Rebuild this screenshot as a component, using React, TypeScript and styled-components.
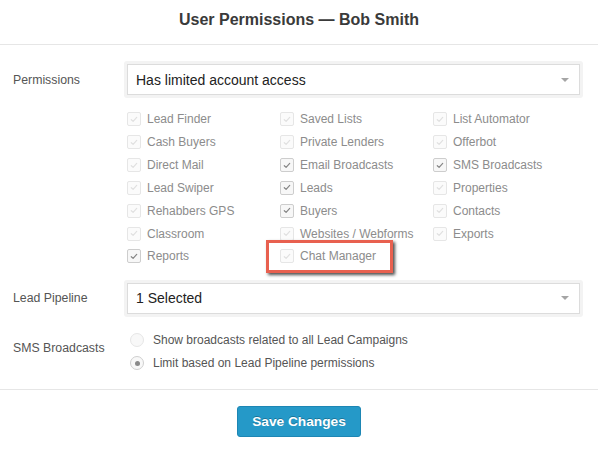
import React from "react";
import styled, { createGlobalStyle } from "styled-components";

const Global = createGlobalStyle`
  html, body { margin: 0; padding: 0; background: #fff; }
  body { font-family: "Liberation Sans", Arial, sans-serif; }
  * { box-sizing: border-box; }
`;

const Modal = styled.div`
  width: 598px;
  height: 452px;
  background: #fff;
  display: flex;
  flex-direction: column;
`;

const Header = styled.div`
  padding: 11px 0 15px;
  border-bottom: 1px solid #e6e6e6;
  text-align: center;
`;

const Title = styled.h1`
  margin: 0;
  font-size: 16px;
  line-height: 18px;
  font-weight: bold;
  color: #3a3a3a;
`;

const Body = styled.div`
  padding: 16px 15px 0 0;
  display: flex;
  flex-direction: column;
  height: 345px;
  border-bottom: 1px solid #e6e6e6;
`;

const FormRow = styled.div<{ $align?: string; $top?: number }>`
  display: grid;
  grid-template-columns: 124px 1fr;
  align-items: ${(p) => p.$align || "center"};
  margin-top: ${(p) => p.$top || 0}px;
`;

const Label = styled.div<{ $pad?: number }>`
  padding-left: 13px;
  padding-top: ${(p) => p.$pad || 0}px;
  font-size: 12.3px;
  color: #555;
`;

const SelectRing = styled.div`
  border: 3px solid #f3f3f3;
  border-radius: 3px;
`;

const SelectBox = styled.div`
  height: 31px;
  border: 1px solid #dcdcdc;
  background: #fff;
  display: flex;
  align-items: center;
  justify-content: space-between;
  padding: 0 10px 0 8px;
  font-size: 14px;
  color: #222;
`;

const Caret = styled.span`
  width: 0;
  height: 0;
  border-left: 4px solid transparent;
  border-right: 4px solid transparent;
  border-top: 4px solid #a5a5a5;
`;

const Grid = styled.div`
  display: grid;
  grid-template-columns: repeat(3, 153px);
  grid-auto-rows: 22.85px;
  padding: 10px 0 0 127px;
  margin-bottom: 12px;
`;

const Item = styled.div`
  position: relative;
  display: flex;
  align-items: center;
  gap: 6px;
  font-size: 12px;
  color: #8c8c8c;
`;

const Highlight = styled.span`
  position: absolute;
  left: -14px;
  top: -5px;
  width: 127px;
  height: 33px;
  border: 3px solid #e8604f;
  box-shadow: 2px 2px 3px rgba(0, 0, 0, 0.7);
  pointer-events: none;
`;

const Box = styled.span<{ $on: boolean }>`
  width: 14px;
  height: 14px;
  border-radius: 2px;
  border: 1px solid ${(p) => (p.$on ? "#cdcdcd" : "#e6e6e6")};
  background: ${(p) => (p.$on ? "#f7f7f7" : "#fbfbfb")};
  display: flex;
  align-items: center;
  justify-content: center;
  flex-shrink: 0;
`;

const RadioList = styled.div`
  display: flex;
  flex-direction: column;
  gap: 8px;
  padding-left: 6px;
`;

const RadioItem = styled.div`
  display: flex;
  align-items: center;
  gap: 9px;
  font-size: 12px;
  color: #555;
  height: 15px;
`;

const Radio = styled.span<{ $on: boolean }>`
  width: 14px;
  height: 14px;
  border-radius: 50%;
  border: 1px solid ${(p) => (p.$on ? "#cfcfcf" : "#e6e6e6")};
  background: #f8f8f8;
  display: flex;
  align-items: center;
  justify-content: center;
  &::after {
    content: "";
    width: 5px;
    height: 5px;
    border-radius: 50%;
    background: ${(p) => (p.$on ? "#8a8a8a" : "transparent")};
  }
`;

const Footer = styled.div`
  display: flex;
  justify-content: center;
  padding-top: 16px;
`;

const SaveButton = styled.button`
  width: 124px;
  height: 31px;
  background: #2599c8;
  border: 1px solid #1d86b4;
  border-radius: 3px;
  color: #fff;
  font-family: "Liberation Sans", Arial, sans-serif;
  font-weight: bold;
  font-size: 13.7px;
  text-shadow: 0 -1px 0 rgba(0, 0, 0, 0.25);
  cursor: pointer;
`;

const Check = ({ on }: { on: boolean }) => (
  <svg width="8" height="7" viewBox="0 0 8 7">
    <path
      d="M1.3 3.7 L3.1 5.4 L6.7 1.4"
      fill="none"
      stroke={on ? "#858585" : "#e0e0e0"}
      strokeWidth="1.2"
      strokeLinecap="round"
      strokeLinejoin="round"
    />
  </svg>
);

type Perm = { name: string; on: boolean; mark?: boolean };

const perms: Perm[] = [
  { name: "Lead Finder", on: false },
  { name: "Saved Lists", on: false },
  { name: "List Automator", on: false },
  { name: "Cash Buyers", on: false },
  { name: "Private Lenders", on: false },
  { name: "Offerbot", on: false },
  { name: "Direct Mail", on: false },
  { name: "Email Broadcasts", on: true },
  { name: "SMS Broadcasts", on: true },
  { name: "Lead Swiper", on: false },
  { name: "Leads", on: true },
  { name: "Properties", on: false },
  { name: "Rehabbers GPS", on: false },
  { name: "Buyers", on: true },
  { name: "Contacts", on: false },
  { name: "Classroom", on: false },
  { name: "Websites / Webforms", on: false },
  { name: "Exports", on: false },
  { name: "Reports", on: true },
  { name: "Chat Manager", on: false, mark: true },
];

export default function App() {
  return (
    <Modal>
      <Global />
      <Header>
        <Title>User Permissions — Bob Smith</Title>
      </Header>
      <Body>
        <FormRow>
          <Label>Permissions</Label>
          <SelectRing>
            <SelectBox>
              <span>Has limited account access</span>
              <Caret />
            </SelectBox>
          </SelectRing>
        </FormRow>
        <Grid>
          {perms.map((p) => (
            <Item key={p.name}>
              <Box $on={p.on}>
                <Check on={p.on} />
              </Box>
              {p.name}
              {p.mark && <Highlight />}
            </Item>
          ))}
        </Grid>
        <FormRow>
          <Label>Lead Pipeline</Label>
          <SelectRing>
            <SelectBox>
              <span>1 Selected</span>
              <Caret />
            </SelectBox>
          </SelectRing>
        </FormRow>
        <FormRow $align="start" $top={16}>
          <Label $pad={8}>SMS Broadcasts</Label>
          <RadioList>
            <RadioItem>
              <Radio $on={false} />
              Show broadcasts related to all Lead Campaigns
            </RadioItem>
            <RadioItem>
              <Radio $on={true} />
              Limit based on Lead Pipeline permissions
            </RadioItem>
          </RadioList>
        </FormRow>
      </Body>
      <Footer>
        <SaveButton>Save Changes</SaveButton>
      </Footer>
    </Modal>
  );
}
